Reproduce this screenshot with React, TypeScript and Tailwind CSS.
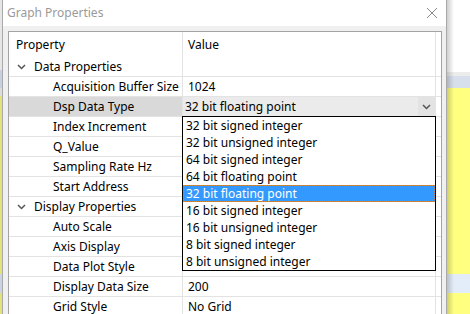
import React from 'react';

type Row = { label: string; value?: string; cat?: boolean; combo?: boolean };

const rows: Row[] = [
  { label: 'Data Properties', cat: true },
  { label: 'Acquisition Buffer Size', value: '1024' },
  { label: 'Dsp Data Type', value: '32 bit floating point', combo: true },
  { label: 'Index Increment' },
  { label: 'Q_Value' },
  { label: 'Sampling Rate Hz' },
  { label: 'Start Address' },
  { label: 'Display Properties', cat: true },
  { label: 'Auto Scale' },
  { label: 'Axis Display' },
  { label: 'Data Plot Style' },
  { label: 'Display Data Size', value: '200' },
  { label: 'Grid Style', value: 'No Grid' },
];

const options = [
  '32 bit signed integer',
  '32 bit unsigned integer',
  '64 bit signed integer',
  '64 bit floating point',
  '32 bit floating point',
  '16 bit signed integer',
  '16 bit unsigned integer',
  '8 bit signed integer',
  '8 bit unsigned integer',
];

function Chevron({ className }: { className?: string }) {
  return (
    <svg width="9" height="6" viewBox="0 0 9 6" className={className}>
      <path d="M1 1 L4.5 4.5 L8 1" fill="none" stroke="#555" strokeWidth="1.5" />
    </svg>
  );
}

function App() {
  return (
    <div className="relative w-[470px] h-[314px] overflow-hidden flex bg-white font-['Noto_Sans',sans-serif] text-[12px] text-black">
      {/* desktop strip on the left */}
      <div className="w-[2px] shrink-0 flex flex-col">
        <div className="h-[70px] shrink-0 bg-[#e6e6e6]" />
        <div className="h-[18px] shrink-0 bg-[#c7d0e0]" />
        <div className="h-[8px] shrink-0 bg-[#dcdcdc]" />
        <div className="h-[178px] shrink-0 bg-[#e2e27a]" />
        <div className="h-[19px] shrink-0 bg-[#c9d3e2]" />
        <div className="flex-1 bg-[#e2e27a]" />
      </div>

      {/* dialog */}
      <div className="w-[445px] shrink-0 border-x border-[#a9a9a9] flex flex-col">
        <div className="h-[26px] shrink-0 bg-white flex items-center justify-between pl-[4px] pr-[8px]">
          <span className="text-[#9a9a9a] leading-none">Graph Properties</span>
          <svg width="12" height="12" viewBox="0 0 12 12">
            <path d="M1 1 L11 11 M11 1 L1 11" stroke="#8a8a8a" strokeWidth="1" />
          </svg>
        </div>
        <div className="flex-1 min-h-0 overflow-hidden bg-[#f0f0f0] pt-[5px] pl-[5px] pr-[4px]">
          <div className="w-[434px] bg-white border border-b-0 border-[#a3a3a3]">
            {/* header */}
            <div className="flex h-[25px]">
              <div className="w-[173px] pl-[7px] pt-[1px] flex items-center">Property</div>
              <div className="w-[253px] border-l border-[#e3e3e3] pl-[5px] pt-[1px] flex items-center">Value</div>
              <div className="w-[6px] border-l border-[#e3e3e3]" />
            </div>
            {rows.map((r) => (
              <div key={r.label} className="flex h-[20px] border-b border-[#e3e3e3]">
                {r.cat ? (
                  <div className="w-[173px] flex items-center pl-[8px] pt-[1px]">
                    <Chevron className="mr-[8px]" />
                    <span>{r.label}</span>
                  </div>
                ) : (
                  <div
                    className={`w-[173px] flex items-center pl-[44px] pt-[1px] whitespace-nowrap overflow-hidden ${
                      r.combo ? 'bg-[#d9d9d9]' : ''
                    }`}
                  >
                    {r.label}
                  </div>
                )}
                {r.combo ? (
                  <div className="w-[253px] border-l border-[#e3e3e3] flex bg-[#ebebeb]">
                    <div className="flex-1 flex items-center pl-[2px] pt-[1px]">{r.value}</div>
                    <div className="w-[17px] flex items-center justify-center bg-[#e3e3e3]">
                      <Chevron />
                    </div>
                  </div>
                ) : (
                  <div className="w-[253px] border-l border-[#e3e3e3] flex items-center pl-[5px] pt-[1px]">{r.value}</div>
                )}
                <div className="w-[6px] border-l border-[#e3e3e3]" />
              </div>
            ))}
          </div>
        </div>
      </div>

      {/* desktop on the right, behind the dialog shadow */}
      <div className="flex-1 flex flex-col relative">
        <div className="h-[72px] shrink-0 bg-white" />
        <div className="h-[4px] shrink-0 bg-[#ececec]" />
        <div className="h-[12px] shrink-0 bg-[#d8dfec]" />
        <div className="h-[186px] shrink-0 bg-[#ffff80]" />
        <div className="h-[19px] shrink-0 bg-[#e3ecf9]" />
        <div className="flex-1 bg-[#ffff80]" />
        <div className="absolute inset-y-0 left-0 w-[7px] bg-gradient-to-r from-[#00000030] to-transparent" />
      </div>

      {/* open dropdown list */}
      <div className="absolute left-[182px] top-[116px] w-[254px] h-[155px] bg-white border border-black">
        {options.map((o, i) => (
          <div
            key={o}
            className={`h-[17px] flex items-center pl-[3px] pt-[1px] whitespace-nowrap ${
              i === 4 ? 'bg-[#3399ff] text-white outline outline-1 outline-dotted outline-[#d08a40] -outline-offset-1' : ''
            }`}
          >
            {o}
          </div>
        ))}
      </div>
    </div>
  );
}

export default App;
